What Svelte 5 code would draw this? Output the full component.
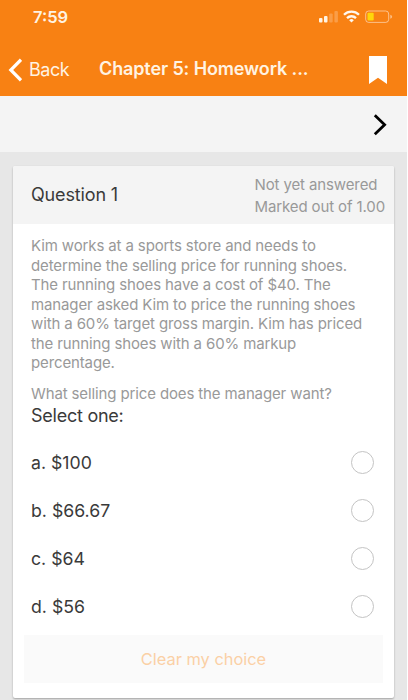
<script lang="ts">
  const lines = [
    "Kim works at a sports store and needs to",
    "determine the selling price for running shoes.",
    "The running shoes have a cost of $40. The",
    "manager asked Kim to price the running shoes",
    "with a 60% target gross margin. Kim has priced",
    "the running shoes with a 60% markup",
    "percentage.",
  ];
  const choices = ["a. $100", "b. $66.67", "c. $64", "d. $56"];
  let selected: string | null = $state(null);
</script>

<div class="screen">
  <header>
    <div class="status">
      <span class="time">7:59</span>
      <svg class="indicators" width="76" height="16" viewBox="0 0 76 16">
        <g fill="#fff3e2">
          <rect x="0" y="10" width="3.5" height="4.5" rx="1" />
          <rect x="5" y="8" width="3.5" height="6.5" rx="1" />
          <rect x="10.2" y="5.5" width="3.5" height="9" rx="1" opacity=".25" />
          <rect x="15.4" y="3" width="3.5" height="11.5" rx="1" opacity=".25" />
        </g>
        <g fill="none" stroke="#fff8ef" stroke-width="2.3">
          <path d="M25 6.8a10.6 10.6 0 0 1 15 0" />
          <path d="M28 10.1a6.4 6.4 0 0 1 9 0" />
        </g>
        <path d="M30.2 12.2a3.3 3.3 0 0 1 4.6 0L32.5 14.6z" fill="#fff8ef" />
        <rect x="46.7" y="3" width="23" height="11.4" rx="3" fill="none" stroke="#fff" stroke-opacity=".5" />
        <rect x="48.5" y="4.8" width="6.2" height="7.8" rx="1" fill="#ffd60a" />
        <path d="M71.3 6.7q1.8.4 1.8 2t-1.8 2z" fill="#fff" opacity=".5" />
      </svg>
    </div>
    <nav>
      <button class="back">
        <svg width="14" height="24" viewBox="0 0 14 24">
          <path d="M13 1.7 2.8 12 13 22.3" fill="none" stroke="#fff" stroke-width="3.2" />
        </svg>
        <span>Back</span>
      </button>
      <h1>Chapter 5: Homework ...</h1>
      <svg width="18" height="28" viewBox="0 0 18 28">
        <path d="M0 0h18v28l-9-6.2L0 28z" fill="#fff" />
      </svg>
    </nav>
  </header>

  <div class="pager">
    <svg width="14" height="22" viewBox="0 0 14 22">
      <path d="M1.8 1.2 11.6 10.7 1.8 20.2" fill="none" stroke="#000" stroke-width="2.8" />
    </svg>
  </div>

  <main>
    <section class="card">
      <div class="card-head">
        <h2>Question 1</h2>
        <div class="state">
          <div>Not yet answered</div>
          <div>Marked out of 1.00</div>
        </div>
      </div>
      <div class="card-body">
        <p class="story">
          {#each lines as line}
            <span>{line}</span>
          {/each}
        </p>
        <p class="ask">What selling price does the manager want?</p>
        <div class="prompt">Select one:</div>
        <div class="choices">
          {#each choices as choice}
            <label>
              <span>{choice}</span>
              <input type="radio" name="answer" value={choice} bind:group={selected} />
            </label>
          {/each}
        </div>
      </div>
      <button class="clear" onclick={() => (selected = null)}>Clear my choice</button>
    </section>
  </main>
</div>

<style>
  :global(body) {
    background: #fff;
  }
  .screen {
    display: flex;
    flex-direction: column;
    width: 407px;
    height: 700px;
    overflow: hidden;
    background: #e7e7e7;
    font-family: Inter, "Liberation Sans", sans-serif;
    color: #3a3a3a;
  }
  h1,
  h2,
  p {
    margin: 0;
    font-weight: 400;
  }
  button {
    border: 0;
    padding: 0;
    font-family: inherit;
    background: none;
  }
  header {
    flex: none;
    height: 96px;
    background: #f88113;
    color: #fff3e2;
  }
  .status {
    display: flex;
    justify-content: space-between;
    height: 34px;
    padding: 0 12px 0 33px;
  }
  .time {
    font-size: 16.5px;
    font-weight: 600;
    line-height: 34px;
  }
  .indicators {
    margin-top: 8px;
  }
  nav {
    display: flex;
    align-items: center;
    height: 72px;
    padding: 0 20px 0 8px;
  }
  .back {
    display: flex;
    align-items: center;
    gap: 7px;
    width: 91px;
    color: inherit;
    font-size: 18px;
    line-height: 24px;
    letter-spacing: -0.5px;
  }
  h1 {
    flex: 1;
    font-size: 18px;
    font-weight: 600;
    line-height: 24px;
    letter-spacing: -0.12px;
    white-space: nowrap;
    margin-top: -3px;
  }
  .pager {
    display: flex;
    flex: none;
    justify-content: flex-end;
    align-items: center;
    height: 56px;
    padding: 1px 20px 0 0;
    background: #f4f4f4;
    box-sizing: border-box;
  }
  main {
    padding: 14px 13px 0;
  }
  .card {
    height: 532px;
    background: #fff;
    border-radius: 2px;
    box-shadow: 0 1px 2px rgba(0, 0, 0, 0.3);
  }
  .card-head {
    display: flex;
    justify-content: space-between;
    height: 58px;
    padding: 0 9px 0 18px;
    background: #f4f4f4;
    border-radius: 2px 2px 0 0;
  }
  h2 {
    font-size: 18px;
    line-height: 58px;
    letter-spacing: -0.15px;
  }
  .state {
    padding-top: 8px;
    font-size: 15px;
    line-height: 22px;
    letter-spacing: -0.12px;
    color: #999;
    white-space: nowrap;
  }
  .card-body {
    padding: 12px 18px 0;
  }
  .story,
  .ask {
    font-size: 15px;
    line-height: 19.5px;
    letter-spacing: -0.125px;
    color: #999;
    white-space: nowrap;
  }
  .story span {
    display: block;
  }
  .ask {
    margin-top: 11px;
  }
  .prompt {
    padding-top: 1px;
    font-size: 18px;
    line-height: 24px;
    letter-spacing: -0.25px;
  }
  .choices {
    padding-top: 11px;
  }
  label {
    display: flex;
    justify-content: space-between;
    align-items: center;
    height: 47.8px;
    font-size: 17.7px;
  }
  input {
    appearance: none;
    width: 23px;
    height: 23px;
    margin: 0 2.5px 0 0;
    border: 1px solid #c4c4c4;
    border-radius: 50%;
  }
  input:checked {
    border: 6px solid #f88113;
  }
  .clear {
    display: block;
    width: 359px;
    height: 48px;
    margin: 4.6px 11px 0;
    background: #fafafa;
    color: #fbd0a5;
    font-size: 16.4px;
  }
</style>
